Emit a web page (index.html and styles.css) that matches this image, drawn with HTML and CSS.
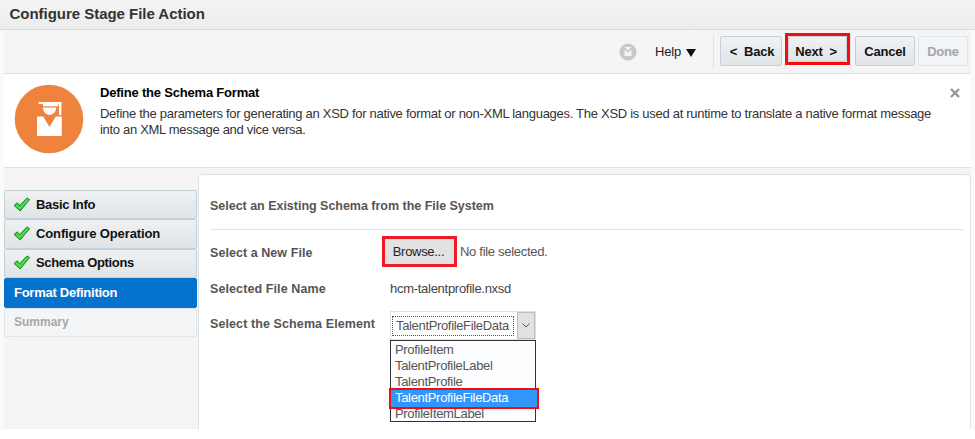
FILE: index.html
```html
<!DOCTYPE html>
<html lang="en">
<head>
<meta charset="utf-8">
<title>Configure Stage File Action</title>
<link rel="stylesheet" href="styles.css">
</head>
<body>
<div class="app">
  <header class="titlebar"><h1><span>Configure Stage File Action</span></h1></header>
  <div class="workspace">
    <div class="toolbar">
      <svg class="user" width="18" height="18" viewBox="0 0 18 18"><circle cx="9" cy="9" r="8.6" fill="#c9c9c9"/><path d="M6 4h6v1h-1l-1 2H8L7 5H6zM5.5 7.5h1.6L9 10l1.9-2.5h1.6V13h-7z" fill="#f5f5f5"/></svg>
      <span class="help">Help</span>
      <svg class="caret" width="10" height="8" viewBox="0 0 10 8"><path d="M0 0h10L5 8z" fill="#111"/></svg>
      <i class="sep"></i>
      <button class="btn back">&lt;&nbsp; Back</button>
      <div class="mark next-mark"><button class="btn next">Next &nbsp;&gt;</button></div>
      <i class="sep second"></i>
      <button class="btn cancel">Cancel</button>
      <button class="btn done" disabled>Done</button>
    </div>
    <section class="intro">
      <svg class="avatar" width="70" height="70" viewBox="0 0 70 70"><circle cx="35" cy="35" r="34.3" fill="#ee833e"/><g fill="#fff" transform="translate(.5 .5)"><path d="M24 17.5h23v2h-3.2v2.3H28.5v-2.3H24z"/><path d="M28.5 23h13.2c0 4-2.8 7.4-6.6 7.4S28.5 27 28.5 23z"/><path d="M44.5 19h2.4v11.5h-2.4z"/><path d="M22.5 32h6.2L35 42.5 41.3 32h6v19.5H22.5z"/></g></svg>
      <div class="copy">
        <h2><span>Define the Schema Format</span></h2>
        <p><span class="d1">Define the parameters for generating an XSD for native format or non-XML languages. The XSD is used at runtime to translate a native format message</span><br><span class="d2">into an XML message and vice versa.</span></p>
      </div>
      <svg class="close" width="10" height="10" viewBox="0 0 10 10"><path d="M1 1l8 8M9 1L1 9" stroke="#92969a" stroke-width="2.3"/></svg>
    </section>
    <div class="main">
      <nav class="steps">
        <a class="step"><svg class="check" width="18" height="16" viewBox="0 0 18 16"><path d="M1 8.4l3.3-2.6 2.4 2.7L14 .9l2.6 1.7L7.2 14z" fill="#35cc3a" stroke="#1c9127"/><path d="M3 8l3.8 3.4L14.5 2.4" fill="none" stroke="#74e46c"/></svg><span class="s1">Basic Info</span></a>
        <a class="step"><svg class="check" width="18" height="16" viewBox="0 0 18 16"><path d="M1 8.4l3.3-2.6 2.4 2.7L14 .9l2.6 1.7L7.2 14z" fill="#35cc3a" stroke="#1c9127"/><path d="M3 8l3.8 3.4L14.5 2.4" fill="none" stroke="#74e46c"/></svg><span class="s2">Configure Operation</span></a>
        <a class="step"><svg class="check" width="18" height="16" viewBox="0 0 18 16"><path d="M1 8.4l3.3-2.6 2.4 2.7L14 .9l2.6 1.7L7.2 14z" fill="#35cc3a" stroke="#1c9127"/><path d="M3 8l3.8 3.4L14.5 2.4" fill="none" stroke="#74e46c"/></svg><span class="s3">Schema Options</span></a>
        <a class="step current"><span class="s4">Format Definition</span></a>
        <a class="step upcoming"><span class="s5">Summary</span></a>
      </nav>
      <section class="panel">
        <h3><span>Select an Existing Schema from the File System</span></h3>
        <div class="row file"><label><span class="l1">Select a New File</span></label>
          <div class="mark browse-mark"><button class="browse">Browse...</button></div><span class="nofile">No file selected.</span></div>
        <div class="row name"><label><span class="l2">Selected File Name</span></label><span class="filename">hcm-talentprofile.nxsd</span></div>
        <div class="row schema"><label><span class="l3">Select the Schema Element</span></label>
          <div class="combo">
            <div class="select"><span class="value">TalentProfileFileData</span><span class="arrow"><svg width="8" height="5" viewBox="0 0 8 5"><path d="M.5.5L4 4 7.5.5" fill="none" stroke="#555"/></svg></span></div>
            <ul class="menu"><li>ProfileItem</li><li>TalentProfileLabel</li><li>TalentProfile</li><li class="chosen">TalentProfileFileData</li><li>ProfileItemLabel</li></ul>
          </div></div>
      </section>
    </div>
  </div>
</div>
</body>
</html>
```
FILE: styles.css
```css
* { box-sizing: border-box; }
body { margin: 0; background: #fff; font: 13px/16px "Liberation Sans", Arial, sans-serif; color: #333; overflow: hidden; }
h1, h2, h3, p, ul { margin: 0; padding: 0; }
span { white-space: nowrap; }
svg { display: block; flex: none; }
.app { height: 429px; background: #fafafa; display: flex; flex-direction: column; overflow: hidden; }
.titlebar { height: 30px; flex: none; padding: 5px 0 0 9.5px; background: linear-gradient(#f4f4f4, #ececec); border-bottom: 1px solid #d5dee3; }
h1 { font-size: 15px; line-height: 18px; color: #333; letter-spacing: -.03px; }
.workspace { flex: 1; margin: 0 4px; display: flex; flex-direction: column; min-height: 0; background: repeating-linear-gradient(45deg, #f6f6f6 0 1.4px, #f3f3f3 1.4px 2.8px); }
.toolbar { height: 44px; flex: none; display: flex; align-items: flex-start; border-bottom: 1px solid #d9e4ea; padding-left: 615px; }
.user { margin-top: 13px; }
.help { margin: 14px 0 0 18px; width: 31px; color: #222; letter-spacing: -.2px; }
.caret { margin-top: 19px; }
.sep { width: 1px; height: 35px; margin: 4px 6px 0 17px; background: #dae4eb; }
.sep.second { margin: 4px 4px 0 0; }
.btn { display: block; height: 30px; margin: 6px 0 0; padding: 2px 0 0; flex: none; border: 1px solid #c5d0d9; border-radius: 2px; background: linear-gradient(#f0f1f2, #e0e5e8); font: bold 13px/16px "Liberation Sans", Arial, sans-serif; letter-spacing: -.2px; color: #111; white-space: nowrap; }
.back { width: 62px; padding-left: 2px; }
.mark { border: 3px solid #f30d10; flex: none; }
.next-mark { width: 65px; height: 32px; margin: 3px 0 0 3px; }
.next { width: 59px; height: 26px; margin: 0; padding: 5px 3px 0 0; line-height: 15px; }
.cancel { width: 60px; }
.done { width: 50px; margin-left: 3px; color: #a4a7aa; border-color: #dde6ec; background: #f2f4f6; }
.intro { height: 94px; flex: none; background: #fff; border-bottom: 1px solid #d9e2e5; display: flex; padding: 10px 11px 0 10px; }
.copy { margin: 1px 0 0 16px; flex: 1; min-width: 0; color: #333; }
h2 { font-size: 13px; line-height: 16px; color: #000; letter-spacing: -.2px; }
.copy p { margin-top: 5px; line-height: 16px; }
.d1 { letter-spacing: -.285px; }
.d2 { letter-spacing: -.31px; }
.close { margin-top: 4px; }
.main { flex: 1; display: flex; min-height: 0; }
.steps { width: 193px; margin-top: 22px; flex: none; }
.step { height: 29.4px; display: flex; align-items: center; padding-left: 8px; border: 1px solid #c4d0d8; border-radius: 2px; background: linear-gradient(#eff1f2, #e0e4e6); font-weight: bold; color: #111; }
.check { margin-right: 5px; }
.s1 { letter-spacing: -.3px; }
.s2 { letter-spacing: -.12px; }
.s3 { letter-spacing: -.33px; }
.s4 { letter-spacing: -.26px; }
.s5 { font-size: 12px; }
.current { background: #0572ce; border-color: #0572ce; color: #fff; padding-left: 9px; }
.upcoming { background: #f3f5f7; border-color: #dfe7ec; color: #a8a8a8; padding-left: 9px; }
.panel { flex: 1; margin: 6px 0 0 1px; padding: 0 6px 0 11px; background: #fff; border: 1px solid #d9e3eb; border-width: 1px 1px 0; border-radius: 5px 5px 0 0; color: #555; }
h3 { font-size: 12.5px; height: 55px; padding: 23px 0 0; line-height: 16px; letter-spacing: -.02px; border-bottom: 1px solid #dfe4ed; }
.row { display: flex; align-items: flex-start; }
label { width: 180px; flex: none; font-weight: bold; font-size: 12.5px; }
.l1 { letter-spacing: .06px; }
.l2, .l3 { letter-spacing: .1px; }
.file { height: 51px; padding-top: 6px; }
.file label { width: 172px; padding-top: 9px; }
.browse-mark { width: 75px; height: 31px; border-color: #ed1b24; }
.browse { display: block; width: 69px; height: 25px; border: 1px solid #ddd; background: #e2e2e2; padding: 0 2px 0 0; font: 13px/16px "Liberation Sans", Arial, sans-serif; letter-spacing: -.3px; color: #222; }
.nofile { margin: 8px 0 0 3px; letter-spacing: -.3px; }
.name { height: 30px; color: #444; }
.name label, .schema label { color: #555; }
.schema label { padding-top: 5px; }
.filename { margin-top: 0; letter-spacing: -.28px; }
.combo { width: 146px; position: relative; }
.select { height: 29px; border: 1px solid #d9e2e8; display: flex; background: #fff; }
.value { width: 122px; height: 20px; margin: 4px 3px 0 1px; padding: 1px 0 0 3px; border: 1px dotted #555; letter-spacing: -.34px; flex: none; }
.arrow { width: 18px; flex: none; background: #e2e2e2; border: 1px solid #bdbdbd; display: flex; align-items: center; justify-content: center; }
.menu { height: 82px; list-style: none; border: 1px solid #333; background: #fbfdff; padding: 1px 0 0; }
.menu li { height: 16px; line-height: 15px; padding-left: 4px; font-size: 13px; letter-spacing: -.32px; white-space: nowrap; }
.menu .chosen { height: 21px; margin: -2px -4px -3px -2px; padding-left: 4px; line-height: 15px; border: 2px solid #f30d10; background: #3297fd; color: #fff; position: relative; }
```
